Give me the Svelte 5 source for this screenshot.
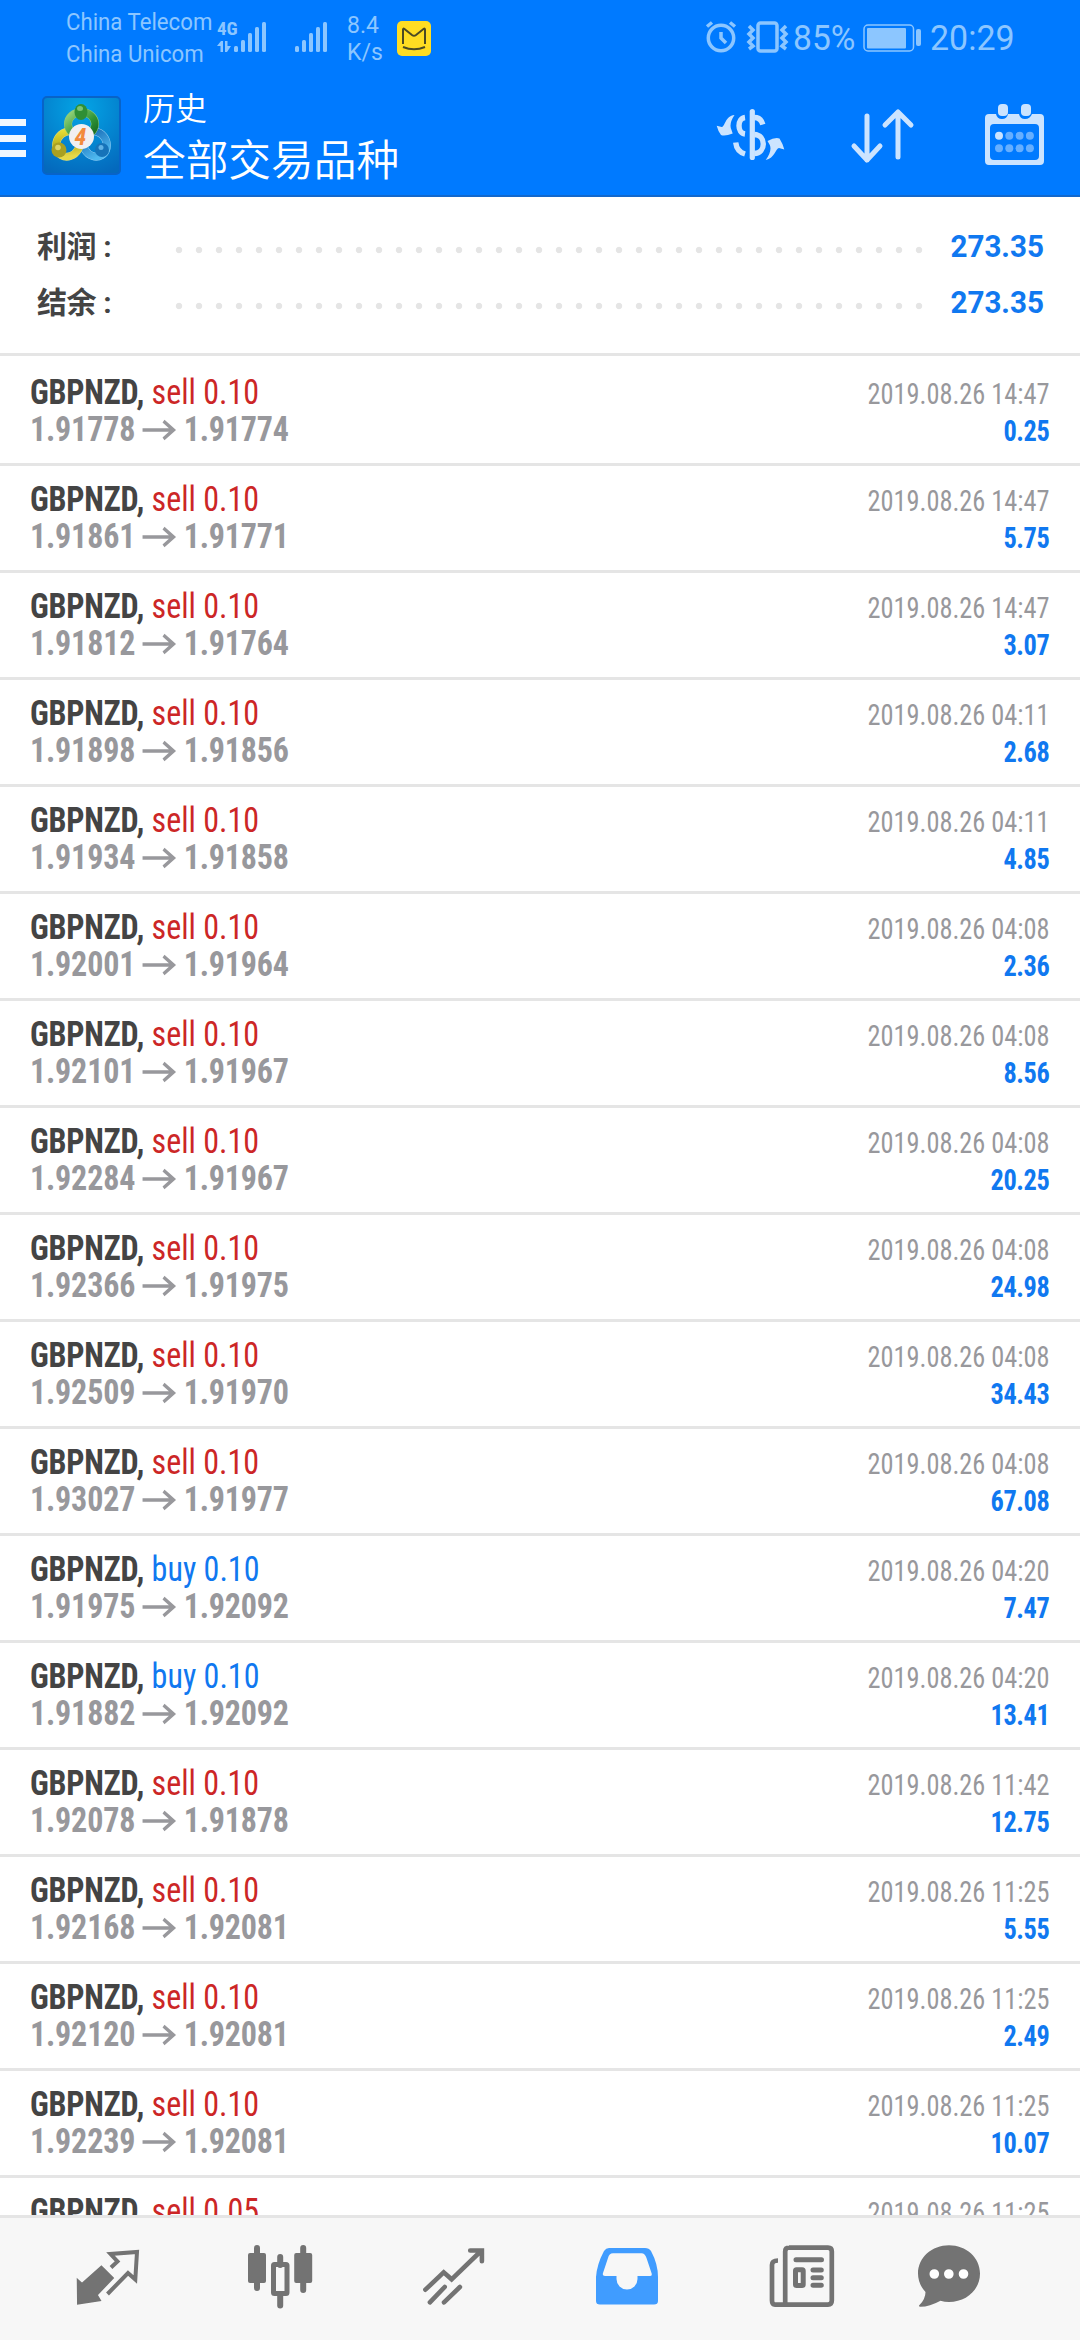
<script lang="ts">
  type Deal = { side: 'sell' | 'buy'; lots: string; open: string; close: string; time: string; profit: string };

  function deal(side: 'sell' | 'buy', open: string, close: string, time: string, profit: string, lots = '0.10'): Deal {
    return { side, lots, open, close, time: `2019.08.26 ${time}`, profit };
  }

  const totals = [
    { label: '利润', value: '273.35' },
    { label: '结余', value: '273.35' }
  ];

  const deals: Deal[] = [
    deal('sell', '1.91778', '1.91774', '14:47', '0.25'),
    deal('sell', '1.91861', '1.91771', '14:47', '5.75'),
    deal('sell', '1.91812', '1.91764', '14:47', '3.07'),
    deal('sell', '1.91898', '1.91856', '04:11', '2.68'),
    deal('sell', '1.91934', '1.91858', '04:11', '4.85'),
    deal('sell', '1.92001', '1.91964', '04:08', '2.36'),
    deal('sell', '1.92101', '1.91967', '04:08', '8.56'),
    deal('sell', '1.92284', '1.91967', '04:08', '20.25'),
    deal('sell', '1.92366', '1.91975', '04:08', '24.98'),
    deal('sell', '1.92509', '1.91970', '04:08', '34.43'),
    deal('sell', '1.93027', '1.91977', '04:08', '67.08'),
    deal('buy', '1.91975', '1.92092', '04:20', '7.47'),
    deal('buy', '1.91882', '1.92092', '04:20', '13.41'),
    deal('sell', '1.92078', '1.91878', '11:42', '12.75'),
    deal('sell', '1.92168', '1.92081', '11:25', '5.55'),
    deal('sell', '1.92120', '1.92081', '11:25', '2.49'),
    deal('sell', '1.92239', '1.92081', '11:25', '10.07'),
    deal('sell', '1.92239', '1.92081', '11:25', '5.04', '0.05')
  ];
</script>

{#snippet signal()}
  <svg class="signal" width="32" height="31" viewBox="0 0 32 31">
    <rect x="0" y="25" width="4" height="6" rx="1.5" />
    <rect x="7" y="19" width="4" height="12" rx="1.5" />
    <rect x="14" y="12" width="4" height="19" rx="1.5" />
    <rect x="21" y="6" width="4" height="25" rx="1.5" />
    <rect x="28" y="1" width="4" height="30" rx="1.5" />
  </svg>
{/snippet}

<div class="app">
  <div class="status">
    <div class="carriers"><span>China Telecom</span><span>China Unicom</span></div>
    <div class="net">
      <span class="net-type">4G</span>
      <svg width="14" height="12" viewBox="0 0 14 12">
        <path d="M0 5 4 0h2v11H3.500V5zM8 0h2.500v5H14l-4 6H8z" />
      </svg>
    </div>
    {@render signal()}
    <div class="second">{@render signal()}</div>
    <div class="speed"><span>8.4</span><span>K/s</span></div>
    <svg class="cat" width="34" height="35" viewBox="0 0 34 35">
      <rect width="34" height="35" rx="5" fill="#fd2" />
      <path d="M6 23V8.500q0-1.500 1.500-.5l7.500 6q2 1.500 4 0l7.500-6q1.500-1 1.500.5V23M6 26q11 4.500 22 0" fill="none" stroke="#4b4a25" stroke-width="2" />
    </svg>
    <div class="status-right">
      <svg width="32" height="32" viewBox="0 0 32 32" class="line">
        <circle cx="16" cy="17" r="12.700" />
        <path d="M16 11v6l5 5M2 5.500 7 1.500M25 1.500l5 4" />
      </svg>
      <svg class="line vibrate" width="41" height="32" viewBox="0 0 41 32">
        <rect x="11" y="2" width="19" height="28" rx="2.500" />
        <path d="m2 5 4 4-4 4 4 4-4 4 4 4-4 3M39 5l-4 4 4 4-4 4 4 4-4 4 4 3" />
      </svg>
      <span class="pct">85%</span>
      <svg class="battery" width="58" height="28" viewBox="0 0 58 28">
        <rect x="1" y="1" width="49.500" height="26" rx="4" fill="none" stroke-width="1.500" />
        <rect x="4" y="4" width="39" height="20.500" rx="1" />
        <rect x="53" y="5" width="5" height="17" rx="2" />
      </svg>
      <span class="clock">20:29</span>
    </div>
  </div>

  <header class="bar">
    <div class="burger"><i></i><i></i><i></i></div>
    <svg class="logo" width="79" height="80" viewBox="0 0 79 80">
      <defs>
        <radialGradient id="tile" cx="0.5" cy="0.15" r="0.9">
          <stop offset="0" stop-color="#04a5e6" />
          <stop offset="1" stop-color="#0469bd" />
        </radialGradient>
        <linearGradient id="green" x1="0" y1="0" x2="1" y2="1">
          <stop offset="0" stop-color="#9ad67c" />
          <stop offset="0.6" stop-color="#2f9437" />
          <stop offset="1" stop-color="#14661f" />
        </linearGradient>
        <linearGradient id="yellow" x1="0" y1="0" x2="0.6" y2="1">
          <stop offset="0" stop-color="#f0e83c" />
          <stop offset="0.6" stop-color="#b9b01d" />
          <stop offset="1" stop-color="#e6d848" />
        </linearGradient>
        <linearGradient id="blue" x1="0" y1="0" x2="0" y2="1">
          <stop offset="0" stop-color="#1a6fb8" />
          <stop offset="1" stop-color="#4fb9f0" />
        </linearGradient>
      </defs>
      <rect x="1" y="1" width="77" height="77" rx="4" fill="url(#tile)" stroke="#0863c8" stroke-width="2" />
      <g fill="none">
        <ellipse cx="53" cy="48" rx="11.500" ry="13" stroke="#8ccbf2" stroke-width="8" transform="rotate(-30 53 48)" />
        <ellipse cx="53" cy="48" rx="11.500" ry="13" stroke="url(#blue)" stroke-width="7" transform="rotate(-30 53 48)" />
        <ellipse cx="26" cy="48" rx="11.500" ry="13" stroke="#d6da7c" stroke-width="8" transform="rotate(30 26 48)" />
        <ellipse cx="26" cy="48" rx="11.500" ry="13" stroke="url(#yellow)" stroke-width="7" transform="rotate(30 26 48)" />
        <ellipse cx="39.500" cy="28" rx="13.500" ry="12" stroke="#8ccb7c" stroke-width="8" />
        <ellipse cx="39.500" cy="28" rx="13.500" ry="12" stroke="url(#green)" stroke-width="7" />
      </g>
      <ellipse cx="39" cy="16" rx="6.500" ry="8" fill="#2f8f35" />
      <circle cx="17" cy="54" r="7.500" fill="#a9a022" />
      <circle cx="60" cy="54" r="7" fill="#1673b9" />
      <ellipse cx="38" cy="12.500" rx="3" ry="2.500" fill="#7cc474" />
      <circle cx="16" cy="51.500" r="2.800" fill="#dcd468" />
      <circle cx="59" cy="51.500" r="2.500" fill="#5fb2e6" />
      <circle cx="39.500" cy="40.500" r="12.500" fill="#f1eff1" />
      <text x="38.500" y="49" text-anchor="middle">4</text>
    </svg>
    <div class="titles">
      <span class="sub">历史</span>
      <h1>全部交易品种</h1>
    </div>
    <div class="actions">
      <svg width="68" height="62" viewBox="0 0 68 62">
        <path d="M35.300 8.500v46" stroke-width="5.200" stroke-linecap="round" />
        <path d="M28 14.500c-8 1-8 15.500 0 16.500M18.700 39.500q1 9 9.300 11.500M37.300 14.500q6.500 0 8.500 7M37.300 31.500c12 .5 12 18.500 0 19" fill="none" stroke-width="5.400" />
        <path d="M17.500 12C8 13 8 24 4.700 24L-.3 22.700Q1 28 4 32q4 1.500 11.700-1.500L14.500 27q-3-6 3-15zM48.700 57c9-1.500 10-12 13.300-12l5.300 1.500Q66 41 62.500 35.500 58 34 50.500 38l2.300 4q2.500 6-4.100 15z" stroke="none" />
      </svg>
      <svg width="78" height="62" viewBox="0 0 78 62">
        <path d="M21 13v44M8 43l13 14 13-14M52 54V9M39 22 52 9l13 13" fill="none" stroke-width="5" stroke-linecap="round" stroke-linejoin="round" />
      </svg>
      <svg width="60" height="62" viewBox="0 0 60 62">
        <path d="M4 11h7q1 5 6 5t6-5h11q1 5 6 5t7-5h8q4 0 4 4v43q0 4-4 4H4q-4 0-4-4V15q0-4 4-4zM9 21q-4 0-4 4v28q0 4 4 4h41q4 0 4-4V25q0-4-4-4z" fill-rule="evenodd" stroke="none" />
        <rect x="13" y="1" width="10" height="12" rx="4" stroke="none" />
        <rect x="36" y="1" width="10" height="12" rx="4" stroke="none" />
        {#each [0, 1, 2, 3, 4, 5, 6, 7] as n}
          <circle cx={14 + (n % 4) * 10.3} cy={n < 4 ? 32.7 : 45.3} r="4" stroke="none" opacity={n ? 0.5 : 1} />
        {/each}
      </svg>
    </div>
  </header>

  <section class="totals">
    {#each totals as t}
      <div class="total">
        <span class="label">{t.label} :</span>
        <span class="dots"></span>
        <span class="value">{t.value}</span>
      </div>
    {/each}
  </section>

  <ul class="deals">
    {#each deals as d}
      <li>
        <div class="left">
          <div class="name"><b>GBPNZD,</b> <span class={d.side}>{d.side} {d.lots}</span></div>
          <div class="prices">
            <span>{d.open}</span>
            <svg width="36" height="20" viewBox="0 0 33 18" preserveAspectRatio="none"><path d="M0 9h31M21 1l10 8-10 8" /></svg>
            <span>{d.close}</span>
          </div>
        </div>
        <div class="right">
          <div class="time">{d.time}</div>
          <div class="profit">{d.profit}</div>
        </div>
      </li>
    {/each}
  </ul>

  <nav>
    <svg viewBox="0 0 80 80">
      <path d="M9.500 39.500 14 43.500 33.400 26.200 45.200 38 29 55l3.300 5.500L9.800 63.800z" stroke-width="1.500" />
      <path d="m43 27.500 6.500-6-7-7.500 26.500-2-1.700 27.500L60 33 39.500 54" fill="none" stroke-width="4" />
    </svg>
    <svg viewBox="0 0 80 80">
      <path d="M16 8v40M39.200 17v8M39.200 54v11.500M62.200 8v42" stroke-width="6" stroke-linecap="round" />
      <rect x="7" y="13" width="18" height="30" rx="2" stroke="none" />
      <rect x="53.200" y="13" width="18" height="30" rx="2" stroke="none" />
      <rect x="32.500" y="24.500" width="13.500" height="29" rx="1" fill="none" stroke-width="5" />
    </svg>
    <svg viewBox="0 0 80 80">
      <path d="m10.400 49.700 18.300-17.400 7.900 7L66 11M55.200 10.500h11.700v10.800M14.900 62.300 29.700 47M29 62.300 44.900 47" fill="none" stroke-width="4.600" stroke-linecap="round" />
    </svg>
    <svg viewBox="0 0 80 80" class="active">
      <path d="M8 37Q9 24 16 11q2-3 5-3h36q4 0 6 3 7 13 7 26v24q0 3.500-4 3.500H12q-4 0-4-3.500zM15 33q-1 3 2 3h11.500v3a10.500 10.500 0 0 0 21 0v-3H62q2.500 0 1.500-3l-5-15q-1.500-4.700-5-4.700H25q-4 0-5 4.700z" fill-rule="evenodd" stroke="none" />
    </svg>
    <svg viewBox="0 0 80 80">
      <path d="M27 7.600h39q3.800 0 3.800 4v49q0 4-3.800 4H13q-3 0-3-4V25q0-4.500 6-4.500M23.200 64V11.500q0-4 4-4" fill="none" stroke-width="4.700" />
      <path d="M34 19.700h25.500M51 30h8.300M51 37.700h8.300M51 45.300h8.300" stroke-width="5" stroke-linecap="round" />
      <rect x="33.500" y="29.800" width="7.700" height="15.700" rx="1" fill="none" stroke-width="5" />
    </svg>
    <svg viewBox="0 0 80 80">
      <path d="M40 5.300c17 0 31 12 31 28.300S57 62 40 62q-4.500 0-8.500-1.200-11 6-20 6-2.500 0-1-1.800Q16.500 59 16.500 52 9 44 9 33.600C9 17.300 23 5.300 40 5.300z" stroke="none" />
      <path d="M25.300 34h.01M39.800 34h.01M54.500 34h.01" stroke="#fff" stroke-width="9.600" stroke-linecap="round" />
    </svg>
  </nav>
</div>

<style>
  :global(body) {
    margin: 0;
    background: #fff;
  }

  .app {
    width: 1080px;
    height: 2340px;
    display: flex;
    flex-direction: column;
    overflow: hidden;
    font-family: Roboto, "Noto Sans CJK SC", sans-serif;
    background: #fff;
  }

  svg {
    display: block;
    flex: none;
    overflow: visible;
  }

  .status {
    height: 76px;
    display: flex;
    align-items: flex-start;
    background: #007aff;
    color: #8cc6ff;
    fill: #8cc6ff;
    padding-left: 66px;
    white-space: nowrap;
  }

  .carriers {
    width: 151px;
    padding-top: 6px;
    display: flex;
    flex-direction: column;
    font-size: 24px;
    line-height: 32px;
    transform: scaleX(0.925);
    transform-origin: left;
  }

  .net {
    width: 17px;
    padding-top: 21px;
  }

  .net-type {
    display: block;
    font-size: 19px;
    font-weight: 700;
    line-height: 15px;
    font-stretch: 75%;
    margin-bottom: 5px;
  }

  .signal {
    margin-top: 21px;
  }

  .second {
    padding-left: 29px;
  }

  .speed {
    width: 50px;
    margin-left: 20px;
    padding-top: 12px;
    display: flex;
    flex-direction: column;
    font-size: 23px;
    line-height: 27px;
  }

  .cat {
    margin-top: 21px;
  }

  .status-right {
    display: flex;
    margin-left: 274px;
    padding-top: 21px;
    font-size: 35px;
    line-height: 35px;
  }

  .line {
    fill: none;
    stroke: #8cc6ff;
    stroke-width: 3.500;
  }

  .vibrate {
    margin-left: 10px;
  }

  .pct {
    width: 70px;
    margin-left: 5px;
    transform: scaleX(0.96);
    transform-origin: left;
  }

  .battery {
    stroke: #8cc6ff;
    stroke-width: 0;
    margin-top: 3px;
  }

  .clock {
    margin-left: 9px;
    transform: scaleX(0.97);
    transform-origin: left;
  }

  .bar {
    height: 119px;
    flex: none;
    display: flex;
    align-items: flex-start;
    background: #007aff;
    border-bottom: 2px solid #1268cc;
    color: #fff;
  }

  .burger {
    width: 26px;
    margin: 43px 16px 0 0;
    display: flex;
    flex-direction: column;
    gap: 8.500px;
  }

  .burger i {
    height: 7px;
    background: #f0f7ff;
  }

  .logo {
    margin-top: 20px;
  }

  .logo text {
    font: italic 700 24px Roboto, sans-serif;
    font-stretch: 75%;
    fill: #f28a3c;
  }

  .titles {
    width: 574px;
    padding: 9px 0 0 22px;
    font-family: "Noto Sans CJK SC", sans-serif;
    font-weight: 350;
  }

  .sub {
    display: block;
    font-size: 32px;
    line-height: 42px;
  }

  h1 {
    margin: 2px 0 0;
    font-size: 42.700px;
    font-weight: 350;
    line-height: 56px;
  }

  .actions {
    display: flex;
    gap: 61px;
    padding-top: 27px;
    fill: #cce4ff;
    stroke: #cce4ff;
  }

  .totals {
    flex: none;
    height: 159px;
    box-sizing: border-box;
    padding: 21px 36px 0 37px;
    border-bottom: 3px solid #e5e5e5;
  }

  .total {
    display: flex;
    align-items: center;
    height: 56px;
    font-weight: 700;
  }

  .label {
    width: 132px;
    margin-top: -4px;
    font-size: 30px;
    letter-spacing: -0.4px;
    color: #444;
  }

  .dots {
    width: 760px;
    height: 20px;
    margin-top: 7px;
    background: radial-gradient(circle, #e5e5e5 2.800px, transparent 3.600px) 0 0 / 20px 20px;
  }

  .value {
    margin-left: auto;
    font-size: 31px;
    color: #1078f0;
    transform: scaleX(0.955);
    transform-origin: right;
  }

  .deals {
    flex: 1;
    min-height: 0;
    overflow: hidden;
    list-style: none;
    margin: 0;
    padding: 3px 0 0;
    font-stretch: 75%;
  }

  li {
    height: 107px;
    box-sizing: border-box;
    display: flex;
    justify-content: space-between;
    padding: 15px 30px 0;
    border-bottom: 3px solid #e5e5e5;
    white-space: nowrap;
  }

  /* the handset's condensed face runs narrower than the 75% width */
  .left {
    transform: scaleX(0.915);
    transform-origin: left;
  }

  .name,
  .prices {
    font-size: 35px;
    line-height: 37px;
    color: #444;
  }

  .name b {
    letter-spacing: -0.2px;
  }

  .sell {
    color: #cc2626;
  }

  .buy {
    color: #1078f0;
  }

  .prices {
    display: flex;
    align-items: center;
    gap: 8.500px;
    font-weight: 700;
    letter-spacing: -0.2px;
    color: #98989c;
  }

  .prices path {
    fill: none;
    stroke: #98989c;
    stroke-width: 3.200;
  }

  .right {
    text-align: right;
    padding-top: 2px;
    font-size: 29px;
    line-height: 37px;
    color: #98989c;
    transform: scaleX(0.908);
    transform-origin: right;
  }

  .profit {
    font-weight: 700;
    letter-spacing: -0.4px;
    color: #1078f0;
  }

  nav {
    flex: none;
    height: 125px;
    box-sizing: border-box;
    display: grid;
    grid-template-columns: repeat(5, 173.500px) 121.500px;
    justify-items: center;
    padding: 22px 0 0 21px;
    border-top: 3px solid #e5e5e5;
    background: #f7f7f7;
    fill: #737373;
    stroke: #737373;
  }

  nav svg {
    width: 80px;
    height: 80px;
  }

  .active {
    fill: #409cff;
  }
</style>
